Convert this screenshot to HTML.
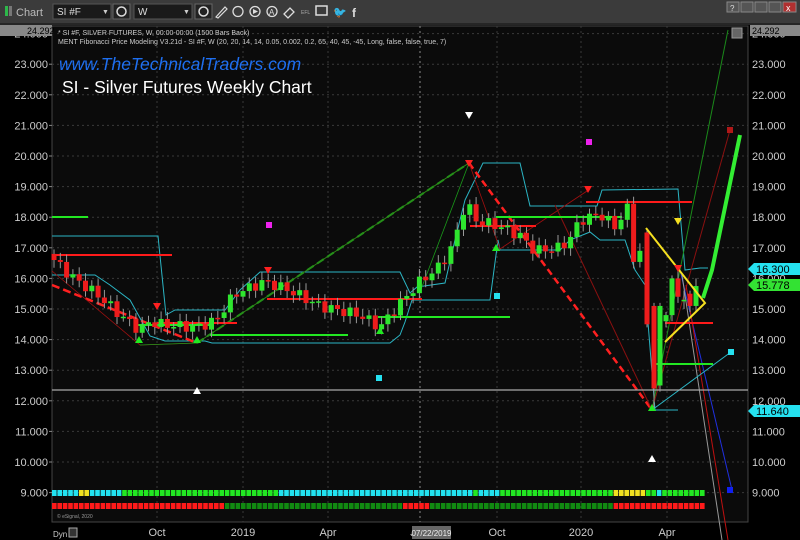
<!DOCTYPE html>
<html><head><meta charset="utf-8"><style>
html,body{margin:0;padding:0;background:#000;width:800px;height:540px;overflow:hidden;font-family:"Liberation Sans",sans-serif}
svg{display:block}
</style></head><body>
<svg id="s" width="800" height="540" viewBox="0 0 800 540" xmlns="http://www.w3.org/2000/svg" font-family="Liberation Sans, sans-serif">
<rect width="800" height="540" fill="#000"/>
<rect x="0" y="0" width="800" height="23" fill="#3b3b3b"/>
<rect x="0" y="23" width="800" height="2" fill="#262626"/>
<rect x="5" y="6" width="3" height="10" fill="#2db84a"/><rect x="9" y="6" width="3" height="10" fill="#777"/>
<text x="16" y="16" font-size="11" fill="#bbb">Chart</text>
<rect x="53" y="4" width="58" height="15" fill="#1a1a1a" stroke="#555"/>
<text x="57" y="15" font-size="10" fill="#ddd">SI #F</text><text x="102" y="14" font-size="7" fill="#ccc">▼</text>
<rect x="113" y="4" width="17" height="15" fill="#222" stroke="#666"/>
<circle cx="121.5" cy="11.5" r="4.5" fill="none" stroke="#ddd" stroke-width="1.5"/>
<rect x="134" y="4" width="58" height="15" fill="#1a1a1a" stroke="#555"/>
<text x="138" y="15" font-size="10" fill="#ddd">W</text><text x="183" y="14" font-size="7" fill="#ccc">▼</text>
<rect x="195" y="4" width="17" height="15" fill="#222" stroke="#666"/>
<circle cx="203.5" cy="11.5" r="4.5" fill="none" stroke="#ddd" stroke-width="1.5"/>
<path d="M216 17 L225 7 L227 9 L218 18 Z" fill="none" stroke="#ddd" stroke-width="1.2"/>
<circle cx="238" cy="11.5" r="5" fill="none" stroke="#ddd" stroke-width="1.3"/>
<circle cx="255" cy="11.5" r="5" fill="none" stroke="#ddd" stroke-width="1.3"/><path d="M253 9 L258 11.5 L253 14Z" fill="#ddd"/>
<circle cx="272" cy="11.5" r="5" fill="none" stroke="#ddd" stroke-width="1.3"/><text x="269" y="15" font-size="8" fill="#ddd">A</text>
<path d="M284 14 L290 8 L294 12 L288 18 Z" fill="none" stroke="#ddd" stroke-width="1.3"/>
<text x="301" y="14" font-size="5" fill="#aaa">EFL</text>
<rect x="316" y="6" width="11" height="9" fill="none" stroke="#ddd" stroke-width="1.5"/>
<text x="333" y="16" font-size="11" fill="#ddd">🐦</text>
<text x="352" y="17" font-size="12" font-weight="bold" fill="#ddd">f</text>
<g fill="#555" stroke="#888">
<rect x="727" y="2" width="12" height="10"/><rect x="741" y="2" width="12" height="10"/><rect x="755" y="2" width="12" height="10"/><rect x="769" y="2" width="12" height="10"/></g>
<rect x="783" y="2" width="13" height="10" fill="#b03030" stroke="#888"/>
<text x="730" y="11" font-size="8" fill="#ddd">?</text><text x="786" y="11" font-size="9" fill="#fff">x</text>
<rect x="52" y="26" width="696" height="496" fill="#0b0b0b" stroke="#444"/>
<g id="grid"></g>
<text x="58" y="35" font-size="7" fill="#ccc">* SI #F, SILVER FUTURES, W, 00:00-00:00 (1500 Bars Back)</text>
<text x="58" y="44" font-size="7" fill="#ccc">MENT Fibonacci Price Modeling V3.21d - SI #F, W (20, 20, 14, 14, 0.05, 0.002, 0.2, 65, 40, 45, -45, Long, false, false, true, 7)</text>
<text x="59" y="70" font-size="17.5" font-style="italic" fill="#1e6ff0">www.TheTechnicalTraders.com</text>
<text x="62" y="93" font-size="17.5" fill="#fff">SI - Silver Futures Weekly Chart</text>
<g id="ov"></g>
<g id="cd"></g>
<g id="top"></g>
<g id="ax" font-size="11" fill="#ccc"></g>
<rect x="0" y="25" width="52" height="11" fill="#888"/><text x="27" y="34" font-size="9" fill="#000">24.292</text>
<rect x="750" y="25" width="50" height="11" fill="#888"/><text x="752" y="34" font-size="9" fill="#000">24.292</text>
<rect x="732" y="28" width="10" height="10" fill="#666" stroke="#999"/>
<path d="M748 269 L754 263 L800 263 L800 275 L754 275Z" fill="#25e1f0"/><text x="756" y="273" font-size="11" fill="#000">16.300</text>
<path d="M748 285 L754 279 L800 279 L800 291 L754 291Z" fill="#33e233"/><text x="756" y="289" font-size="11" fill="#000">15.778</text>
<path d="M748 411 L754 405 L800 405 L800 417 L754 417Z" fill="#25e1f0"/><text x="756" y="415" font-size="11" fill="#000">11.640</text>
<text x="57" y="518" font-size="5" fill="#999">© eSignal, 2020</text>
<g font-size="11" fill="#ccc" text-anchor="middle">
<text x="157" y="536">Oct</text><text x="243" y="536">2019</text><text x="328" y="536">Apr</text><text x="413" y="536">J</text><text x="497" y="536">Oct</text><text x="581" y="536">2020</text><text x="667" y="536">Apr</text></g>
<rect x="412" y="526" width="39" height="13" fill="#666"/><text x="431.5" y="536" font-size="8" fill="#eee" text-anchor="middle">07/22/2019</text>
<text x="53" y="537" font-size="8" fill="#ccc">Dyn</text><rect x="69" y="528" width="8" height="9" fill="#333" stroke="#aaa"/>
</svg>
<script>
const NS="http://www.w3.org/2000/svg";
function Y(v){return 156+(20-v)*30.6;}
function el(p,t,a){const e=document.createElementNS(NS,t);for(const k in a)e.setAttribute(k,a[k]);p.appendChild(e);return e;}
const grid=document.getElementById('grid'),ax=document.getElementById('ax');
for(let v=9;v<=24;v++){const y=Y(v);el(grid,'line',{x1:52,x2:748,y1:y,y2:y,stroke:'#3a3a3a','stroke-dasharray':'2,3'});
 [[48,'end'],[752,'start']].forEach(([x,a])=>{const t=el(ax,'text',{x:x,y:y+4,'text-anchor':a});t.textContent=v.toFixed(3);});
 el(ax,'line',{x1:49,x2:52,y1:y,y2:y,stroke:'#888'});}
[157,243,328,420,497,581,667].forEach(x=>el(grid,'line',{x1:x,x2:x,y1:26,y2:522,stroke:x==420?'#888':'#3a3a3a','stroke-dasharray':'2,3'}));
const anchors=[[54,16.6],[70,16.1],[100,15.4],[120,14.8],[140,14.3],[150,14.6],[160,14.5],[195,14.4],[215,14.6],[235,15.5],[265,15.9],[290,15.6],[320,15.1],[360,14.8],[380,14.4],[395,15.0],[420,15.9],[440,16.4],[455,17.2],[462,18.2],[468,18.4],[475,17.9],[500,17.7],[520,17.4],[535,16.9],[560,17.0],[570,17.3],[580,17.9],[600,18.1],[618,17.6],[626,18.6],[634,16.6],[641,16.9]];
function interp(x){for(let i=0;i<anchors.length-1;i++){const[a,b]=anchors[i],[c,d]=anchors[i+1];if(x>=a&&x<=c)return b+(d-b)*(x-a)/(c-a);}return 16.9;}
const cd=document.getElementById('cd');
function candle(x,o,c,hi,lo){el(cd,'line',{x1:x,x2:x,y1:Y(hi),y2:Y(lo),stroke:'#999','stroke-width':1});
 const up=c>=o;let t=Y(Math.max(o,c)),h=Math.max(1.5,Math.abs(Y(o)-Y(c)));
 el(cd,'rect',{x:x-2.5,y:t,width:5,height:h,fill:up?'#2ee62e':'#ee1c1c'});}
let prev=16.8,i=0;
for(let x=54;x<=640;x+=6.3,i++){let c=interp(x)+0.18*Math.sin(i*2.3);let o=prev;
 candle(x,o,c,Math.max(o,c)+0.15+0.1*Math.abs(Math.sin(i)),Math.min(o,c)-0.15-0.1*Math.abs(Math.cos(i)));prev=c;}
[[647,17.5,14.5,17.6,14.4],[654,15.1,12.4,15.2,11.7],[660,12.5,15.1,15.2,12.3],[666,14.6,14.8,14.9,14.4],[672,14.8,16.0,16.1,14.6],[678,16.0,15.4,16.3,15.2],[684,15.3,15.3,15.6,15.0],[690,15.5,15.1,15.6,14.9],[696,15.1,15.75,16.0,14.9]].forEach(a=>candle(...a));
const ov=document.getElementById('ov'),top_=document.getElementById('top');
function L(g,pts,c,w,d){el(g,'polyline',{points:pts,fill:'none',stroke:c,'stroke-width':w||1,'stroke-dasharray':d||''});}
L(ov,'52,236 158,236 166,315 175,310 225,310 240,290 260,272 400,272 410,293 417,287 445,283 455,240 465,200 483,163 520,163 530,206 597,206 602,190 678,189 685,270 700,268 708,268','#2bb5c4',1);
L(ov,'52,275 95,275 110,285 130,300 150,336 165,341 205,341 212,343 285,343 300,343 390,343 400,335 405,322 412,300 418,300 490,300 498,240 500,250 520,250 560,250 570,240 590,232 600,240 613,240 625,240 635,270 645,285 655,410 670,410 678,410','#2bb5c4',1);
L(ov,'52,285 197,343','#ff2020',2.5,'8,4');L(ov,'469,163 652,410','#ff2020',2.5,'7,4');
L(ov,'197,343 469,163','#1aa01a',2,'8,4');
L(ov,'52,271 140,345 197,343 469,163 500,249 590,189','#a01010',0.8);
L(ov,'140,345 197,343 469,163','#1a9a1a',0.8);L(ov,'420,292 469,163','#1a9a1a',0.8);
L(ov,'652,410 728,30','#1a8a1a',1);L(ov,'652,410 730,130','#8a1010',1);L(ov,'555,205 652,410','#8a1010',1);
L(ov,'680,270 732,490','#2030e0',1);L(ov,'682,275 722,540','#999',1);L(ov,'686,285 728,540','#c01010',1);
L(ov,'652,410 731,352','#2bb5c4',1);
L(ov,'52,390 748,390','#aaa',1.2);
[[52,172,255],[157,237,323],[267,422,299],[470,536,226],[586,692,202],[665,713,323]].forEach(([a,b,y])=>L(ov,`${a},${y} ${b},${y}`,'#ff1a1a',2));
[[52,88,217],[137,212,325],[210,348,335],[378,510,317],[496,622,217],[655,713,364]].forEach(([a,b,y])=>L(ov,`${a},${y} ${b},${y}`,'#22e822',2));
L(top_,'646,228 705,303 665,342','#f5e020',2);
L(top_,'703,298 712,270 740,135','#33ee33',4);
el(top_,'rect',{x:727,y:127,width:6,height:6,fill:'#b01818'});
el(top_,'rect',{x:727,y:487,width:6,height:6,fill:'#1020f0'});
[[379,378],[497,296],[731,352]].forEach(([x,y])=>el(top_,'rect',{x:x-3,y:y-3,width:6,height:6,fill:'#25e1f0'}));
[[269,225],[589,142]].forEach(([x,y])=>el(top_,'rect',{x:x-3,y:y-3,width:6,height:6,fill:'#ee22ee'}));
function tri(x,y,c,up){el(top_,'path',{d:up?`M${x-4} ${y+3}L${x+4} ${y+3}L${x} ${y-4}Z`:`M${x-4} ${y-3}L${x+4} ${y-3}L${x} ${y+4}Z`,fill:c});}
tri(469,115,'#fff',0);tri(197,391,'#fff',1);tri(652,459,'#fff',1);tri(678,221,'#f5e020',0);
tri(139,340,'#22e822',1);tri(197,340,'#22e822',1);tri(380,331,'#22e822',1);tri(496,248,'#22e822',1);tri(652,408,'#22e822',1);
tri(157,306,'#ff2020',0);tri(469,163,'#ff2020',0);tri(268,270,'#ff2020',0);tri(588,189,'#ff2020',0);tri(678,268,'#ff2020',0);
function band(y,segs){let x=52;const w=5.4;segs.forEach(([end,c])=>{while(x<end){el(top_,'rect',{x:x,y:y,width:w-0.8,height:6,fill:c});x+=w;}});}
band(490,[[77,'#22e2f0'],[88,'#f0e020'],[120,'#22e2f0'],[275,'#22e822'],[470,'#22e2f0'],[477,'#22e822'],[498,'#22e2f0'],[610,'#22e822'],[645,'#f0e020'],[652,'#22e822'],[658,'#22e2f0'],[702,'#22e822']]);
band(503,[[222,'#ff1a1a'],[402,'#118a11'],[428,'#ff1a1a'],[610,'#118a11'],[702,'#ff1a1a']]);
</script>
</body></html>
